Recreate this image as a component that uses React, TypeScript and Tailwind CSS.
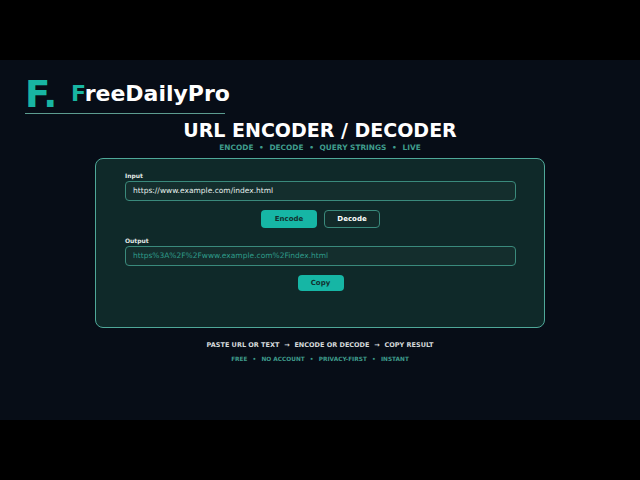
import React from 'react';

const font = { fontFamily: '"DejaVu Sans", sans-serif' };

function Field({ label, value, muted }: { label: string; value: string; muted?: boolean }) {
  return (
    <div className="flex flex-col">
      <label className="text-[6px] leading-[9px] h-[9px] font-bold text-[#e2e8e6]">{label}</label>
      <div className="mt-[1px] h-[20px] w-[391px] flex items-center px-[7px] rounded-[4px] border border-[#3a8a7c] bg-[#142e2d]">
        <span className={`text-[7.5px] ${muted ? 'text-[#2f9c8a]' : 'text-[#e6eeec]'}`}>{value}</span>
      </div>
    </div>
  );
}

function Strip({ items, sep, sepClass, className }: { items: string[]; sep: string; sepClass: string; className: string }) {
  return (
    <div className={`flex justify-center font-bold ${className}`}>
      {items.map((item, i) => (
        <React.Fragment key={item}>
          {i > 0 && <span className={`text-center ${sepClass}`}>{sep}</span>}
          <span>{item}</span>
        </React.Fragment>
      ))}
    </div>
  );
}

export default function App() {
  return (
    <div className="w-[640px] h-[480px] bg-black py-[60px] overflow-hidden" style={font}>
      <div className="h-[360px] bg-[#070d17] flex flex-col">
        <div className="pl-[25px] pt-[16px]">
          <div className="w-[200px] h-[38px] border-b border-[#5c9c90] flex items-start">
            <span className="w-[46px] shrink-0 text-[37px] leading-[37px] font-bold text-[#18b5a3] tracking-[-1.5px]">F.</span>
            <span className="mt-[5px] text-[22px] leading-[26px] font-bold text-white whitespace-nowrap">
              <span className="text-[#18b5a3]">F</span>reeDailyPro
            </span>
          </div>
        </div>
        <h1 className="mt-[4px] text-center text-[19px] leading-[24px] font-bold text-white">URL ENCODER / DECODER</h1>
        <Strip
          items={['ENCODE', 'DECODE', 'QUERY STRINGS', 'LIVE']}
          sep="•"
          sepClass="w-[16px]"
          className="mt-[1px] h-[10px] text-[7.4px] leading-[10px] text-[#3f9c8c]"
        />
        <div className="mx-[95px] mt-[5px] w-[450px] h-[170px] rounded-[8px] border border-[#4fa899] bg-[#0f2929] pl-[29px] pt-[12px] flex flex-col">
          <Field label="Input" value="https://www.example.com/index.html" />
          <div className="mt-[9px] flex justify-center gap-[7px] w-[391px] h-[18px]">
            <button className="w-[56px] rounded-[4px] bg-[#16b6a5] text-[7px] font-bold text-[#12302f]">Encode</button>
            <button className="w-[56px] rounded-[4px] border border-[#3a8a7c] bg-[#122b2a] text-[7px] font-bold text-white">Decode</button>
          </div>
          <div className="mt-[8px]">
            <Field label="Output" value="https%3A%2F%2Fwww.example.com%2Findex.html" muted />
          </div>
          <div className="mt-[9px] flex justify-center w-[391px]">
            <button className="w-[46px] h-[16px] rounded-[4px] bg-[#16b6a5] text-[7px] font-bold text-[#12302f]">Copy</button>
          </div>
        </div>
        <Strip
          items={['PASTE URL OR TEXT', 'ENCODE OR DECODE', 'COPY RESULT']}
          sep="→"
          sepClass="w-[15px]"
          className="mt-[12px] text-[6.5px] leading-[10px] text-[#d5dadb]"
        />
        <Strip
          items={['FREE', 'NO ACCOUNT', 'PRIVACY-FIRST', 'INSTANT']}
          sep="•"
          sepClass="w-[14px]"
          className="mt-[4px] text-[5.8px] leading-[10px] text-[#3f9c8c]"
        />
      </div>
    </div>
  );
}
